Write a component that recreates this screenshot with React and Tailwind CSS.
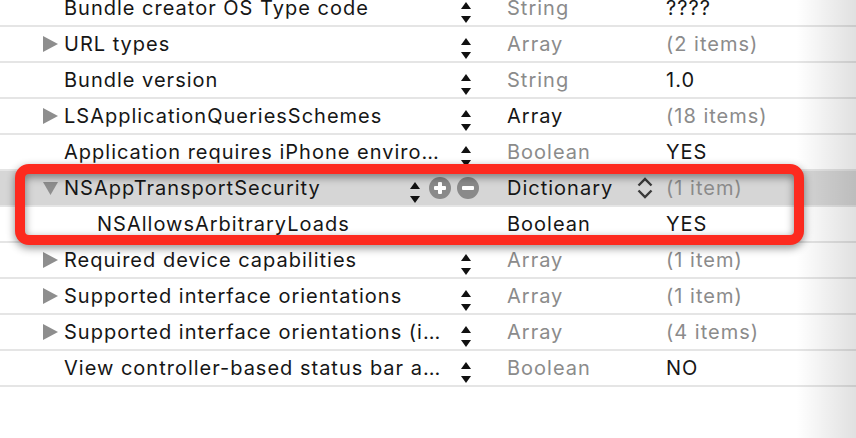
import React from 'react';

const rows = [
  { key: 'Bundle creator OS Type code', type: 'String', value: '????', typeDim: true },
  { key: 'URL types', tri: true, type: 'Array', value: '(2 items)', typeDim: true, valueDim: true },
  { key: 'Bundle version', type: 'String', value: '1.0', typeDim: true },
  { key: 'LSApplicationQueriesSchemes', tri: true, type: 'Array', value: '(18 items)', valueDim: true },
  { key: 'Application requires iPhone enviro…', type: 'Boolean', value: 'YES', typeDim: true },
  { key: 'NSAppTransportSecurity', selected: true, type: 'Dictionary', value: '(1 item)', valueDim: true },
  { key: 'NSAllowsArbitraryLoads', child: true, type: 'Boolean', value: 'YES' },
  { key: 'Required device capabilities', tri: true, type: 'Array', value: '(1 item)', typeDim: true, valueDim: true },
  { key: 'Supported interface orientations', tri: true, type: 'Array', value: '(1 item)', typeDim: true, valueDim: true },
  { key: 'Supported interface orientations (i…', tri: true, type: 'Array', value: '(4 items)', typeDim: true, valueDim: true },
  { key: 'View controller-based status bar a…', type: 'Boolean', value: 'NO', typeDim: true },
];

const Stepper = () => (
  <svg width="10" height="34" viewBox="0 0 10 34" className="shrink-0">
    <polygon points="0,18 5,11 10,18" fill="#111" />
    <polygon points="0,25 10,25 5,32" fill="#111" />
  </svg>
);

const TriRight = () => (
  <svg width="15" height="16" viewBox="0 0 15 16">
    <polygon points="0,0 15,8 0,16" fill="#8e8e8e" />
  </svg>
);

const TriDown = () => (
  <svg width="15" height="13" viewBox="0 0 15 13">
    <polygon points="0,0 15,0 7.5,13" fill="#8e8e8e" />
  </svg>
);

const CircleBtn = ({ minus }) => (
  <svg width="22" height="22" viewBox="0 0 22 22" className="shrink-0">
    <circle cx="11" cy="11" r="11" fill="#8a8a8a" />
    <rect x="5" y="9" width="12" height="4" rx="1" fill="#fff" />
    {!minus && <rect x="9" y="5" width="4" height="12" rx="1" fill="#fff" />}
  </svg>
);

const UpDown = () => (
  <svg width="16" height="22" viewBox="0 0 16 22" className="shrink-0">
    <polyline points="1.5,8.5 8,2 14.5,8.5" fill="none" stroke="#3a3a3a" strokeWidth="2.4" />
    <polyline points="1.5,13.5 8,20 14.5,13.5" fill="none" stroke="#3a3a3a" strokeWidth="2.4" />
  </svg>
);

const Row = ({ row }) => {
  const dim = 'text-[#8b8b8b]';
  const dark = 'text-[#161616]';
  return (
    <div
      className={`flex h-9 items-center border-b-2 border-[#e5e5e5] ${row.selected ? 'bg-[#d6d6d6]' : 'bg-white'}`}
    >
      <div className="w-[43px] shrink-0" />
      <div className="flex w-[21px] shrink-0 items-center">
        {row.tri && <TriRight />}
        {row.selected && <TriDown />}
      </div>
      {row.selected ? (
        <>
          <div className={`w-[346px] shrink-0 whitespace-nowrap ${dark}`}>{row.key}</div>
          <Stepper />
          <div className="ml-[9px] flex gap-[6px]">
            <CircleBtn />
            <CircleBtn minus />
          </div>
          <div className="w-[28px] shrink-0" />
          <div className={`w-[130px] shrink-0 ${dark}`}>{row.type}</div>
          <UpDown />
          <div className="w-[13px] shrink-0" />
          <div className={dim}>{row.value}</div>
        </>
      ) : (
        <>
          <div className={`w-[397px] shrink-0 whitespace-nowrap ${dark} ${row.child ? 'pl-[33px]' : ''}`}>{row.key}</div>
          {row.child ? <div className="w-[10px] shrink-0" /> : <Stepper />}
          <div className="w-[36px] shrink-0" />
          <div className={`w-[159px] shrink-0 ${row.typeDim ? dim : dark}`}>{row.type}</div>
          <div className={row.valueDim ? dim : dark}>{row.value}</div>
        </>
      )}
    </div>
  );
};

export default function App() {
  return (
    <div
      className="relative h-[438px] w-[856px] overflow-hidden bg-white text-[20px] leading-none tracking-[1px]"
      style={{ fontFamily: 'Inter, "Liberation Sans", sans-serif' }}
    >
      <div className="-mt-[9px]">
        {rows.map((row) => (
          <Row key={row.key} row={row} />
        ))}
      </div>

      {/* highlight box */}
      <div className="pointer-events-none absolute left-[15px] top-[164px] h-[81px] w-[789px] rounded-[14px] border-[10px] border-[#fd2a1f] drop-shadow-[0_3px_4px_rgba(0,0,0,0.45)]" />

      {/* window edge shading */}
      <div className="pointer-events-none absolute right-0 top-0 h-full w-[60px] bg-linear-to-r from-transparent to-black/[0.12]" />
    </div>
  );
}
